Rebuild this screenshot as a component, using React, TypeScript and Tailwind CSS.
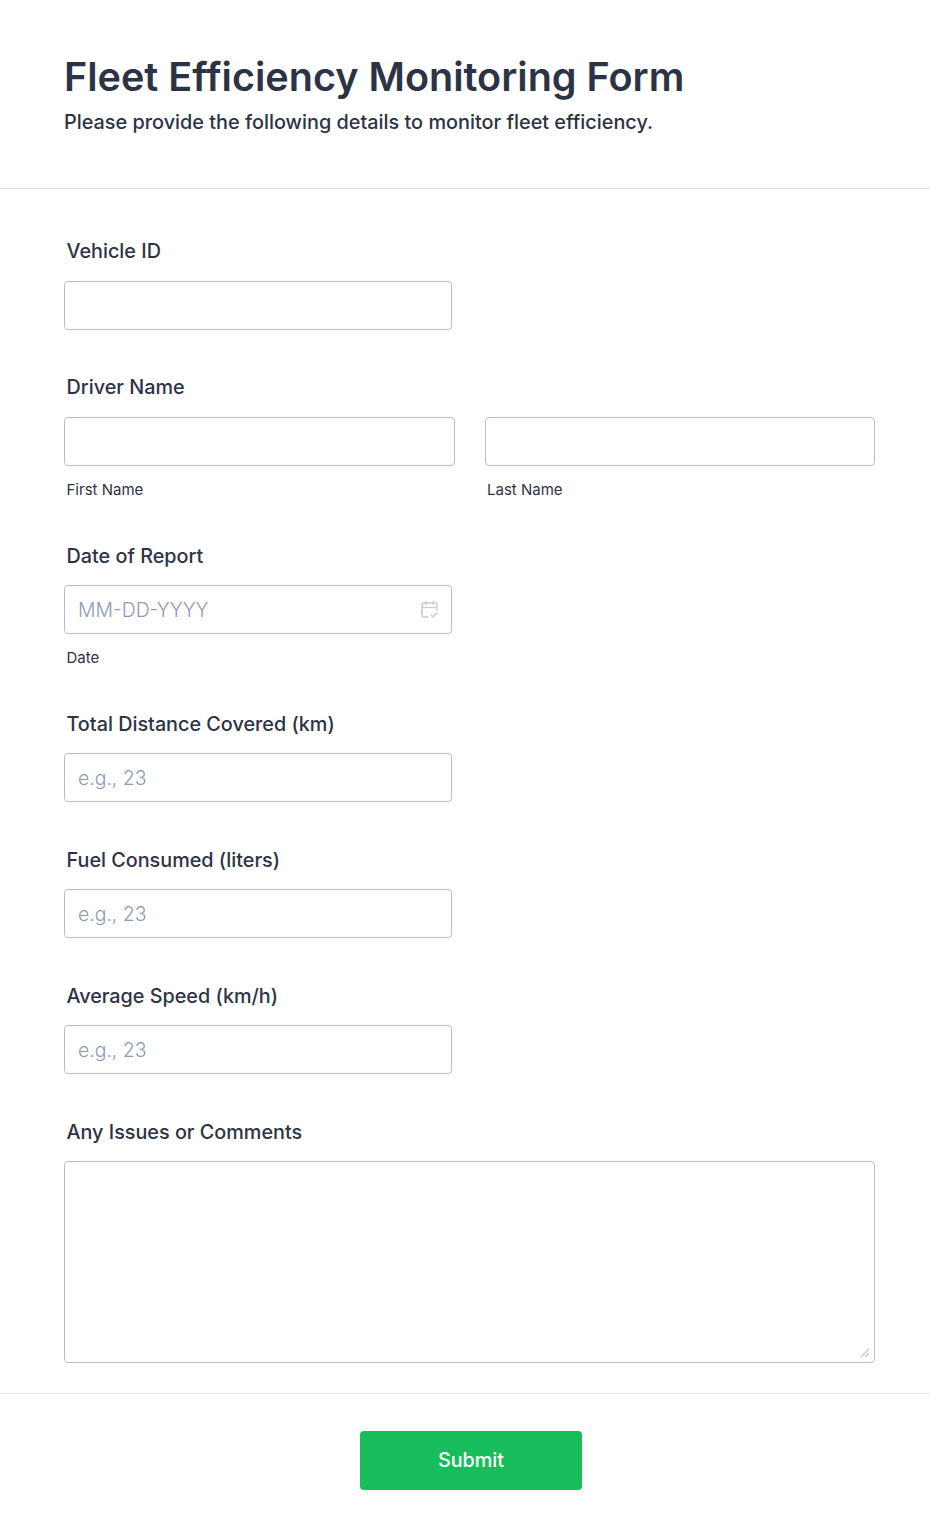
import React from 'react';

const inputClass =
  'block h-[49px] w-full rounded-[4px] border border-[#b8bdc9] bg-white px-[13px] text-[19.4px] font-light text-[#2c3345] placeholder:text-[#8c9bb5] outline-none';

const Label: React.FC<{ children: React.ReactNode }> = ({ children }) => (
  <label className="mb-[17px] ml-[2.5px] block h-[24px] text-[19.8px] leading-[24px] font-medium text-[#2c3345]">{children}</label>
);

const SubLabel: React.FC<{ children: React.ReactNode }> = ({ children }) => (
  <span className="mt-[14px] ml-[2.5px] block h-[20px] text-[15px] leading-[20px] text-[#2c3345]">{children}</span>
);

const NumberField: React.FC<{ label: string }> = ({ label }) => (
  <div className="mb-[46px] w-[388px]">
    <Label>{label}</Label>
    <input type="text" placeholder="e.g., 23" className={inputClass} />
  </div>
);

export default function App() {
  return (
    <div className="h-[1540px] w-full overflow-hidden bg-white font-['Inter',sans-serif]">
      <header className="h-[189px] border-b border-[#d8dae9] px-[64px] pt-[52px]">
        <h1 className="text-[39.55px] leading-[50px] font-semibold text-[#2c3345]">Fleet Efficiency Monitoring Form</h1>
        <p className="mt-[7px] text-[19.85px] leading-[26px] font-medium text-[#2c3345]">Please provide the following details to monitor fleet efficiency.</p>
      </header>

      <form className="h-[1205px] border-b border-[#eaebf2] pt-[50px] pr-[55px] pl-[64px]">
        <div className="mb-[45px] w-[388px]">
          <Label>Vehicle ID</Label>
          <div className="pt-px">
            <input type="text" className={inputClass} />
          </div>
        </div>

        <div className="mb-[44px]">
          <Label>Driver Name</Label>
          <div className="grid grid-cols-2 gap-[30px] pt-px">
            <div>
              <input type="text" className={inputClass} />
              <SubLabel>First Name</SubLabel>
            </div>
            <div>
              <input type="text" className={inputClass} />
              <SubLabel>Last Name</SubLabel>
            </div>
          </div>
        </div>

        <div className="mb-[44px] w-[388px]">
          <Label>Date of Report</Label>
          <div className="relative">
            <input type="text" placeholder="MM-DD-YYYY" className={inputClass} />
            <svg
              className="absolute top-[15px] right-[13px]"
              width="19"
              height="19"
              viewBox="0 0 19 19"
              fill="none"
              stroke="#c6cad5"
              strokeWidth="1.4"
              strokeLinecap="round"
              strokeLinejoin="round"
            >
              <path d="M8 17H3.5A1.5 1.5 0 0 1 2 15.500V4.500A1.500 1.500 0 0 1 3.500 3H15.500A1.500 1.500 0 0 1 17 4.500V10" />
              <path d="M2 7.500H17" strokeDasharray="1.500 1.500" />
              <path d="M6 1.500V4.500M13 1.500V4.500" />
              <path d="M11 15L13 17L17 13" />
              <path d="M2 11V13" />
            </svg>
          </div>
          <SubLabel>Date</SubLabel>
        </div>

        <NumberField label="Total Distance Covered (km)" />
        <NumberField label="Fuel Consumed (liters)" />
        <NumberField label="Average Speed (km/h)" />

        <div>
          <Label>Any Issues or Comments</Label>
          <div className="relative">
            <textarea className="block h-[202px] w-full resize-none rounded-[4px] border border-[#b8bdc9] bg-white outline-none" />
            <svg className="absolute right-[5px] bottom-[5px]" width="10" height="10" viewBox="0 0 10 10" fill="none" stroke="#c4c4c4" strokeWidth="1.2">
              <path d="M1 9L9 1M5 9L9 5" />
            </svg>
          </div>
        </div>
      </form>

      <div className="flex justify-center pt-[37px] pl-[12px]">
        <button type="button" className="h-[59px] w-[222px] rounded-[4px] bg-[#18bd5b] pt-px text-[19.8px] font-medium text-white">
          Submit
        </button>
      </div>
    </div>
  );
}
